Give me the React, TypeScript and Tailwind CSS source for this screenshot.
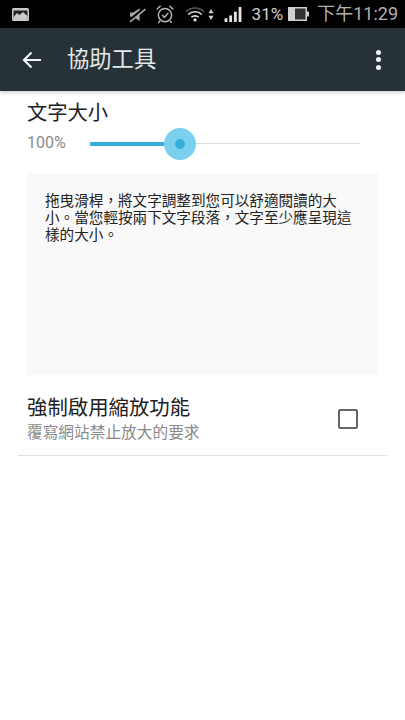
const font = { fontFamily: 'Roboto, "Noto Sans CJK TC", sans-serif' }

function StatusBar() {
  return (
    <div className="h-[28px] bg-black flex items-center pl-[12px] pr-[7px] text-[#c4c4c4]">
      {/* gallery notification */}
      <svg width="17" height="13" viewBox="0 0 17 13">
        <rect x="0" y="0" width="17" height="13" rx="1.5" fill="#c8c8c8" />
        <rect x="1.5" y="2.5" width="14" height="8.5" fill="#222" />
        <path d="M1.5 9 L5 5 L7.5 7 L11 4 L15.5 8 V11 H1.5 Z" fill="#c8c8c8" />
      </svg>
      <div className="flex-1" />
      {/* muted */}
      <svg width="17" height="17" viewBox="0 0 16 16" className="mr-[9px]" fill="#a8a8a8">
        <path d="M1 6 H4 L10 2 V14 L4 10 H1 Z" />
        <path d="M0.5 14 L15 1.5" stroke="#000" strokeWidth="3" />
        <path d="M1 15 L15.5 3" stroke="#a8a8a8" strokeWidth="1.5" />
      </svg>
      {/* alarm */}
      <svg width="20" height="20" viewBox="0 0 18 18" fill="none" stroke="#b8b8b8" strokeWidth="1.3" className="mr-[10px]">
        <circle cx="9" cy="10" r="6" />
        <path d="M6.5 10 L8.5 12 L12 8" />
        <path d="M1.5 5 L5 1.5 M16.5 5 L13 1.5 M4.5 15 L3 17 M13.5 15 L15 17" />
      </svg>
      {/* wifi */}
      <svg width="20" height="17" viewBox="0 0 22 18" fill="none" className="mr-[3px]">
        <path d="M1 6 C6.5 0.5 15.5 0.5 21 6" stroke="#555" strokeWidth="1.6" />
        <path d="M3.5 9 C7.5 5 14.5 5 18.5 9" stroke="#e0e0e0" strokeWidth="1.8" />
        <path d="M7 12 C9 10 13 10 15 12" stroke="#e0e0e0" strokeWidth="1.8" />
        <circle cx="11" cy="15" r="1.8" fill="#e0e0e0" />
      </svg>
      <svg width="6" height="13" viewBox="0 0 7 14" fill="#d0d0d0" className="mr-[10px]">
        <path d="M3.5 0.5 L6.5 5.5 H0.5 Z M3.5 13.5 L0.5 8.5 H6.5 Z" />
      </svg>
      {/* signal */}
      <svg width="18" height="15" viewBox="0 0 18 16" fill="#e4e4e4" className="mr-[10px]">
        <rect x="0" y="12" width="3" height="4" />
        <rect x="5" y="9" width="3" height="7" />
        <rect x="10" y="5" width="3" height="11" />
        <rect x="15" y="0" width="3" height="16" />
      </svg>
      <span className="text-[17px] leading-none text-[#d0d0d0] mr-[5px]">31%</span>
      {/* battery */}
      <svg width="21" height="14" viewBox="0 0 21 14" className="mr-[8px]">
        <rect x="0" y="0" width="19" height="14" fill="#d0d0d0" />
        <rect x="7" y="1.5" width="10.5" height="11" fill="#333" />
        <rect x="19" y="4.5" width="2" height="5" fill="#d0d0d0" />
      </svg>
      <span className="text-[18px] leading-none text-[#b0b0b0]">下午11:29</span>
    </div>
  )
}

function Toolbar() {
  return (
    <div className="h-[63px] bg-[#263238] flex items-center pl-[22px] pr-[24px] shadow-[0_1px_4px_rgba(0,0,0,0.25)] relative">
      <svg width="20" height="18" viewBox="0 0 20 18" fill="none" stroke="#f2f4f4" strokeWidth="2.2">
        <path d="M19 9 H2 M9.5 1.5 L2 9 L9.5 16.5" />
      </svg>
      <span className="ml-[25px] text-[22.3px] leading-none text-[#e4e8e9]">協助工具</span>
      <div className="flex-1" />
      <div className="flex flex-col gap-[2.5px]">
        <div className="w-[5px] h-[5px] rounded-full bg-[#f2f4f4]" />
        <div className="w-[5px] h-[5px] rounded-full bg-[#f2f4f4]" />
        <div className="w-[5px] h-[5px] rounded-full bg-[#f2f4f4]" />
      </div>
    </div>
  )
}

function Slider({ percent }: { percent: number }) {
  return (
    <div className="relative w-[270px] h-[1px] ml-[25px] bg-[#d9d9d9]">
      <div className="absolute left-0 top-[-1px] h-[4px] bg-[#35aedd]" style={{ width: `${percent}%` }} />
      <div className="absolute left-[74px] top-[-15px] w-[32px] h-[32px] rounded-full bg-[#7cd0ef]" />
      <div className="absolute left-[85px] top-[-4px] w-[10px] h-[10px] rounded-full bg-[#35aedd]" />
    </div>
  )
}

export default function App() {
  return (
    <div className="w-[405px] h-[720px] bg-white overflow-hidden" style={font}>
      <StatusBar />
      <Toolbar />
      <div className="px-[27px] pt-[9px]">
        <div className="text-[20.3px] leading-[26px] text-[#212121]">文字大小</div>
        <div className="flex items-center h-[32px] mt-[1px]">
          <span className="text-[16px] leading-none text-[#8a8a8a] w-[38px]">100%</span>
          <Slider percent={33.3} />
        </div>
        <div className="mt-[14px] h-[202px] bg-[#f9f9f9] pl-[18px] pr-[20px] pt-[20px] text-[14.6px] leading-[17px] text-[#222]">
          拖曳滑桿，將文字調整到您可以舒適閱讀的大小。當您輕按兩下文字段落，文字至少應呈現這樣的大小。
        </div>
      </div>
      <div className="mx-[18px] h-[81px] pt-[9px] border-b border-[#e2e2e2] flex items-center pl-[9px] pr-[29px]">
        <div className="flex-1 pt-[2px]">
          <div className="text-[20.4px] leading-[25px] text-[#212121]">強制啟用縮放功能</div>
          <div className="text-[15.7px] leading-[24px] text-[#8a8a8a]">覆寫網站禁止放大的要求</div>
        </div>
        <div className="w-[20px] h-[20px] mb-[2px] border-2 border-[#666] rounded-[2px]" />
      </div>
    </div>
  )
}
